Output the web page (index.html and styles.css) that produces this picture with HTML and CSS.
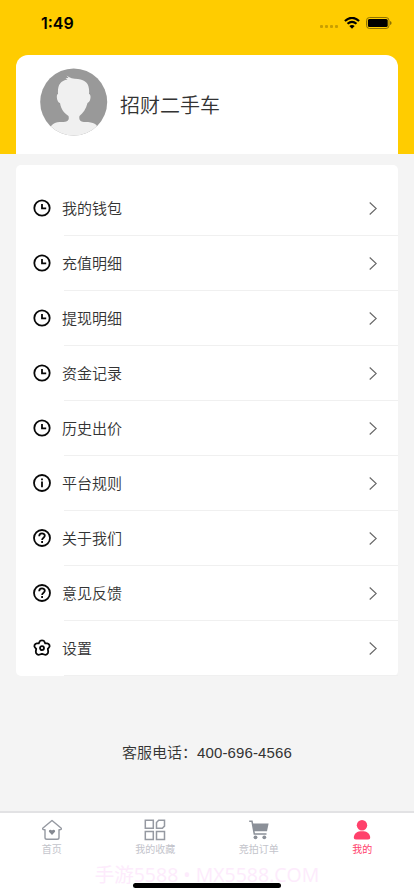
FILE: index.html
```html
<!DOCTYPE html>
<html lang="zh-CN">
<head>
<meta charset="utf-8">
<meta name="viewport" content="width=device-width, initial-scale=1">
<title>我的</title>
<link rel="stylesheet" href="styles.css">
</head>
<body>
<svg class="sprite" width="0" height="0" aria-hidden="true">
  <symbol id="clock" viewBox="0 0 18 18"><circle cx="9" cy="9" r="7.7"/><path d="M9 5v4.4h4.2"/></symbol>
  <symbol id="info" viewBox="0 0 18 18"><circle cx="9" cy="9" r="8"/><path d="M9 7.500v5.700M9 4.500v1.700"/></symbol>
  <symbol id="help" viewBox="0 0 18 18"><circle cx="9" cy="9" r="8"/><path d="M6.200 7.200C6.200 3.300 11.800 3.600 11.800 6.800C11.800 8.700 9.100 8.700 9.100 10.900M9.100 12.100v1.800"/></symbol>
  <symbol id="gear" viewBox="0 0 18 18"><path stroke-linejoin="round" d="M6.600 2.600Q7 1.300 9 1.300T11.400 2.600L12.200 4.300L14.300 4.400Q15.800 4.600 16.500 6.200Q16.900 7.500 16 8.500L14.800 9.900L15.200 12.600Q15.300 14.300 13.900 15.300Q12.600 16.200 11.200 15.500L9 14.800L6.800 15.500Q5.400 16.200 4.100 15.300Q2.700 14.300 2.800 12.600L3.200 9.900L2 8.500Q1.100 7.500 1.500 6.200Q2.200 4.600 3.700 4.400L5.800 4.300Z"/><circle cx="9" cy="9.100" r="2"/></symbol>
  <symbol id="chevron" viewBox="0 0 8 13"><path d="M.7.5 7.200 6.500.7 12.500"/></symbol>
</svg>
<div class="screen">
  <header class="hero">
    <div class="status">
      <span class="time">1:49</span>
      <div class="status-icons">
        <span class="dots"><i></i><i></i><i></i><i></i></span>
        <svg width="16" height="12" viewBox="0 0 16 12"><path d="M.9 4.100Q8-2.500 15.100 4.100M3.500 6.800Q8 2.900 12.500 6.800" fill="none" stroke="#000" stroke-width="2.100"/><path d="M5.300 9Q8 6.800 10.700 9L8 11.800Z"/></svg>
        <svg class="battery" width="26" height="12" viewBox="0 0 26 12"><rect x=".5" y=".5" width="22.500" height="11" rx="3" fill="none" stroke="#725b00" stroke-width=".8"/><rect x="1.900" y="1.900" width="19.800" height="8.200" rx="1.500"/><path d="M24.200 4v4q1.300-.6 1.300-2t-1.300-2" fill="#725b00"/></svg>
      </div>
    </div>
    <section class="profile">
      <svg class="avatar" width="68" height="68" viewBox="0 0 68 68">
        <defs><clipPath id="disc"><circle cx="33.700" cy="34" r="33.500"/></clipPath></defs>
        <g clip-path="url(#disc)"><path fill="#999" d="M0 0h68v68H0z"/><path fill="#f0f0f0" d="M18 26C17.500 17 20 13 27.500 11.500L25.500 10L28.500 10L26.500 7.500Q31 11 38 11C46 12 50 16 49 26C51.500 26 51 34 47.500 35C46 41 43 45 39.500 48C38.500 52 41 54 45 54C54 54 57 56 59 62L54 69H14L9 62C12 55 15 54 22 54C28 54 29.500 52 28.500 48C24 45 21 41 20 35C16.500 34 16 26 18 26Z"/></g>
      </svg>
      <h1>招财二手车</h1>
    </section>
  </header>
  <main>
    <ul class="menu">
      <li><svg class="icon"><use href="#clock"/></svg><span>我的钱包</span><svg class="chevron"><use href="#chevron"/></svg></li>
      <li><svg class="icon"><use href="#clock"/></svg><span>充值明细</span><svg class="chevron"><use href="#chevron"/></svg></li>
      <li><svg class="icon"><use href="#clock"/></svg><span>提现明细</span><svg class="chevron"><use href="#chevron"/></svg></li>
      <li><svg class="icon"><use href="#clock"/></svg><span>资金记录</span><svg class="chevron"><use href="#chevron"/></svg></li>
      <li><svg class="icon"><use href="#clock"/></svg><span>历史出价</span><svg class="chevron"><use href="#chevron"/></svg></li>
      <li><svg class="icon"><use href="#info"/></svg><span>平台规则</span><svg class="chevron"><use href="#chevron"/></svg></li>
      <li><svg class="icon"><use href="#help"/></svg><span>关于我们</span><svg class="chevron"><use href="#chevron"/></svg></li>
      <li><svg class="icon"><use href="#help"/></svg><span>意见反馈</span><svg class="chevron"><use href="#chevron"/></svg></li>
      <li><svg class="icon"><use href="#gear"/></svg><span>设置</span><svg class="chevron"><use href="#chevron"/></svg></li>
    </ul>
    <p class="phone">客服电话：<span>400-696-4566</span></p>
  </main>
  <footer>
    <nav class="tabs">
      <a><svg width="22" height="22" viewBox="0 0 22 22"><path d="M11 1.500 1.700 9.200Q1.200 11 4 10.700V18.500Q4 20.300 5.800 20.300H16.200Q18 20.300 18 18.500V10.700Q20.800 11 20.300 9.200Z" fill="none" stroke="#9599a1" stroke-width="1.400" stroke-linejoin="round"/><path d="M11 15.900 8.200 13.100C6.800 11 9.800 9.600 11 11.600C12.200 9.600 15.200 11 13.800 13.100Z" fill="#858991"/></svg><span>首页</span></a>
      <a><svg width="22" height="22" viewBox="0 0 22 22" fill="none" stroke="#9599a1" stroke-width="1.500"><path d="M1.300 1.300h8v8h-8zM1.300 12.500h8v8h-8zM12.500 12.500h8v8h-8zM14.700 1.300h5.800v5.800l-2.200 2.200h-5.800V3.500z"/></svg><span>我的收藏</span></a>
      <a><svg width="22" height="22" viewBox="0 0 22 22"><path d="M4.300 4.500H20.600L19 12.300H6Z" fill="#8b9098"/><path d="M1.200 2.300H4L6.300 14.900H18.500" fill="none" stroke="#8b9098" stroke-width="1.500"/><circle cx="7.500" cy="18.300" r="1.900" fill="#8b9098"/><circle cx="16.300" cy="18.300" r="1.900" fill="#8b9098"/></svg><span>竞拍订单</span></a>
      <a class="active"><svg width="22" height="22" viewBox="0 0 22 22" fill="#ff416b"><circle cx="11" cy="6.300" r="5.200"/><path d="M2.800 18C3.500 14 6 12.200 11 12.200S18.500 14 19.200 18Q19.400 20.500 17 20.500H5Q2.600 20.500 2.800 18Z"/></svg><span>我的</span></a>
    </nav>
    <div class="watermark">手游5588 • MX5588.COM</div>
    <div class="home-bar"></div>
  </footer>
</div>
</body>
</html>
```
FILE: styles.css
```css
* { box-sizing: border-box; }
body {
  margin: 0;
  background: #f4f4f4;
  color: #333;
  font-family: "Liberation Sans", "Noto Sans CJK SC", sans-serif;
}
.sprite { position: absolute; }
svg { display: block; flex: none; }
.screen { height: 896px; display: flex; flex-direction: column; overflow: hidden; }
.hero { height: 154px; background: #fc0; padding: 0 16px; }
.status {
  height: 55px;
  padding: 14px 6px 0 25px;
  display: flex;
  justify-content: space-between;
  align-items: flex-start;
}
.time { font: 600 16px/18px Inter, sans-serif; color: #000; }
.status-icons { display: flex; align-items: flex-start; padding-top: 3px; }
.dots { display: flex; gap: 2px; padding-top: 8px; margin-right: 6px; }
.dots i { width: 3px; height: 3px; border-radius: 1px; background: #c89f00; }
.battery { margin-left: 6px; }
.profile {
  height: 99px;
  padding: 13px 0 0 24px;
  display: flex;
  align-items: flex-start;
  background: #fff;
  border-radius: 12px 12px 0 0;
}
h1 {
  margin: 22px 0 0 12px;
  font-family: "Noto Sans CJK SC", sans-serif;
  font-size: 20px;
  line-height: 30px;
  font-weight: 350;
}
main { flex: 1; padding: 11px 16px 0; }
.menu {
  margin: 0;
  padding: 16px 0 0;
  list-style: none;
  background: #fff;
  border-radius: 5px;
}
.menu li {
  height: 55px;
  display: flex;
  align-items: center;
  padding: 0 21px 1px 17px;
  font-size: 15px;
  font-weight: 350;
  background: linear-gradient(#f0f0f0, #f0f0f0) 48px 100% / 100% 1px no-repeat;
}
.menu li span { flex: 1; margin-left: 11px; padding-top: 1px; line-height: 22px; }
.icon { width: 18px; height: 18px; fill: none; stroke: #080808; stroke-width: 1.8; }
.chevron { width: 8px; height: 13px; fill: none; stroke: #666; stroke-width: 1.1; }
.phone { margin: 66px 0 0; font-size: 15px; line-height: 22px; text-align: center; font-weight: 350; }
.phone span { letter-spacing: .12px; }
footer {
  height: 85px;
  border-top: 2px solid #e2e2e4;
  background: #fff;
  display: flex;
  flex-direction: column;
  align-items: center;
}
.tabs { width: 100%; height: 49px; display: grid; grid-template-columns: repeat(4, 1fr); }
.tabs a {
  display: flex;
  flex-direction: column;
  align-items: center;
  padding-top: 6px;
  font-size: 10px;
  line-height: 14px;
  color: #c3c4cb;
}
.tabs a span { margin-top: 2px; }
.tabs .active { color: #ff416b; }
.watermark {
  height: 21px;
  font: 19.5px/26px "Open Sans", "Noto Sans CJK SC", sans-serif;
  white-space: nowrap;
  color: #fdebfc;
}
.home-bar { width: 148px; height: 5px; border-radius: 3px; background: #000; position: relative; }
```
